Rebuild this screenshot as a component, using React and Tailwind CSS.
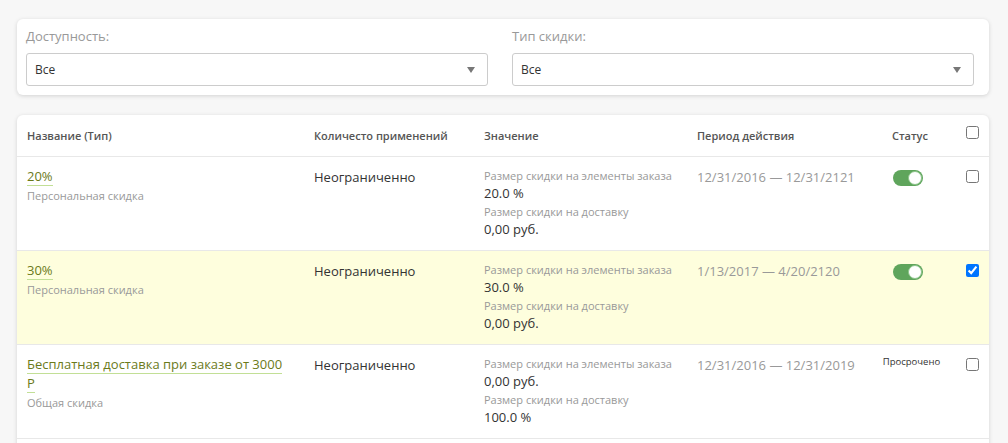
import React from "react";

const grid = "grid grid-cols-[287px_170px_213px_183px_78px_1fr]";

function Select({ label }) {
  return (
    <div className="flex flex-col">
      <div className="text-[13px] leading-[20px] text-[#999]">{label}</div>
      <div className="mt-[7px] h-[33px] border border-[#cccccc] rounded-[3px] bg-white flex items-center justify-between pl-[8px] pr-[12px]">
        <span className="text-[12px] text-[#333]">Все</span>
        <svg width="8" height="6" viewBox="0 0 8 6">
          <path d="M0 0 L8 0 L4 6 Z" fill="#777" />
        </svg>
      </div>
    </div>
  );
}

function Toggle() {
  return (
    <div className="inline-flex w-[30px] h-[16px] rounded-full bg-[#5fa55c] items-center justify-end pr-[1px]">
      <div className="w-[14px] h-[14px] rounded-full bg-white border border-[#8cc48a]" />
    </div>
  );
}

function Checkbox({ checked }) {
  return (
    <input
      type="checkbox"
      readOnly
      checked={!!checked}
      className="w-[13px] h-[13px] m-0 block"
    />
  );
}

function Row({ name, type, v1, v2, period, status, checked, highlight }) {
  return (
    <div className={`${grid} border-b border-[#e8e8e8] ${highlight ? "bg-[#fefedd]" : "bg-white"}`}>
      <div className="pl-[10px] pr-[20px] pt-[10px] pb-[10px]">
        <div className="text-[13px] leading-[19px] text-[#6b7a1a]">
          <span className="border-b border-[#c2df96]">{name}</span>
        </div>
        <div className="text-[11px] leading-[17px] text-[#999] mt-[1px]">{type}</div>
      </div>
      <div className="pl-[10px] pt-[10px] text-[13px] leading-[20px] text-[#333]">Неограниченно</div>
      <div className="pl-[10px] pt-[10px] pb-[11px]">
        <div className="text-[11px] leading-[17px] text-[#999]">Размер скидки на элементы заказа</div>
        <div className="text-[13px] leading-[19px] text-[#333]">{v1}</div>
        <div className="text-[11px] leading-[17px] text-[#999]">Размер скидки на доставку</div>
        <div className="text-[13px] leading-[19px] text-[#333]">{v2}</div>
      </div>
      <div className="pl-[10px] pt-[10px] text-[13px] leading-[20px] text-[#999]">{period}</div>
      <div className="pt-[10px] flex justify-center">
        {status === "on" ? (
          <div className="pr-[3px]"><Toggle /></div>
        ) : (
          <div className="text-[9.5px] leading-[14px] text-[#333] pl-[5px]">Просрочено</div>
        )}
      </div>
      <div className="pl-[18px] pt-[13px]">
        <Checkbox checked={checked} />
      </div>
    </div>
  );
}

export default function App() {
  return (
    <div
      className="min-h-screen bg-[#f7f7f7] pl-[17px] pr-[19px] pt-[19px]"
      style={{ fontFamily: '"Open Sans", "Noto Sans", sans-serif' }}
    >
      <div className="bg-white rounded-[6px] shadow-[0_1px_4px_rgba(0,0,0,0.15)] pl-[9px] pr-[15px] pt-[7px] pb-[9px] grid grid-cols-2 gap-[24px]">
        <Select label="Доступность:" />
        <Select label="Тип скидки:" />
      </div>

      <div className="mt-[20px] bg-white rounded-t-[6px] shadow-[0_1px_4px_rgba(0,0,0,0.15)] pb-[40px]">
        <div className={`${grid} h-[42px] border-b border-[#e8e8e8] items-center text-[11px] font-semibold text-[#555]`}>
          <div className="pl-[10px] pt-[2px]">Название (Тип)</div>
          <div className="pl-[10px] pt-[2px]">Количесто применений</div>
          <div className="pl-[10px] pt-[2px]">Значение</div>
          <div className="pl-[10px] pt-[2px]">Период действия</div>
          <div className="text-center pt-[2px] pl-[2px]">Статус</div>
          <div className="pl-[18px] pb-[6px]">
            <Checkbox />
          </div>
        </div>
        <Row
          name="20%"
          type="Персональная скидка"
          v1="20.0 %"
          v2="0,00 руб."
          period="12/31/2016 — 12/31/2121"
          status="on"
        />
        <Row
          name="30%"
          type="Персональная скидка"
          v1="30.0 %"
          v2="0,00 руб."
          period="1/13/2017 — 4/20/2120"
          status="on"
          checked
          highlight
        />
        <Row
          name="Бесплатная доставка при заказе от 3000 Р"
          type="Общая скидка"
          v1="0,00 руб."
          v2="100.0 %"
          period="12/31/2016 — 12/31/2019"
          status="expired"
        />
      </div>
    </div>
  );
}
